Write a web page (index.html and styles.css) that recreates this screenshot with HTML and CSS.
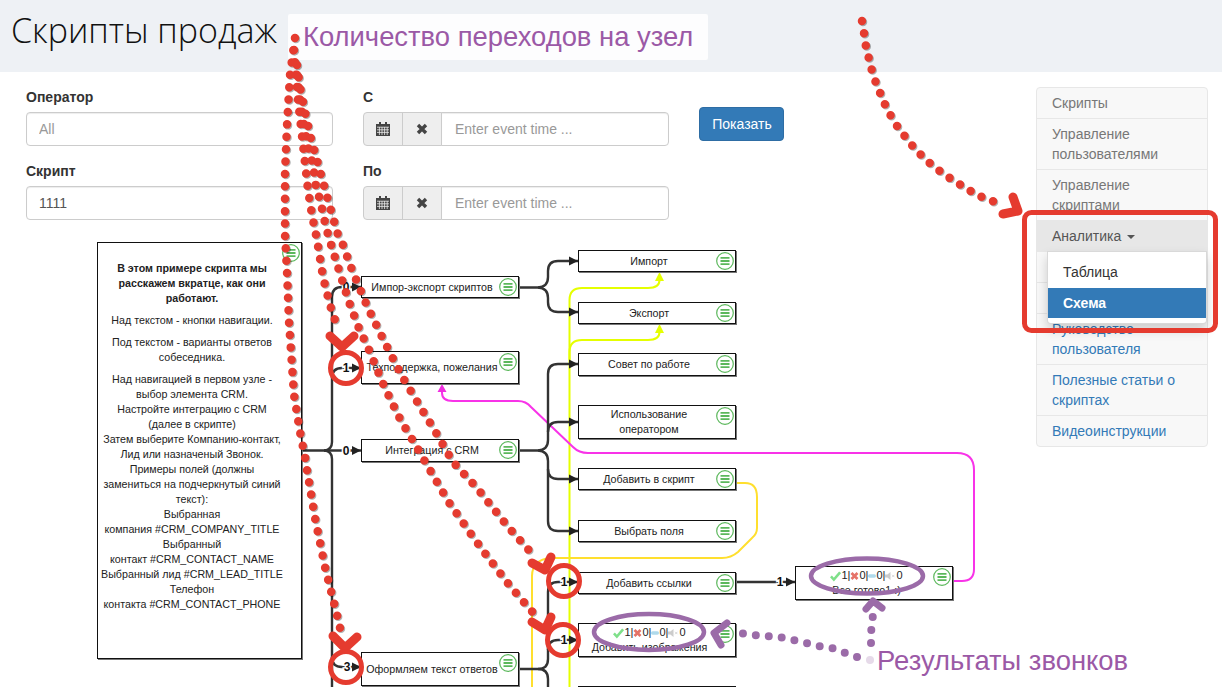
FILE: index.html
```html
<!DOCTYPE html>
<html lang="ru">
<head>
<meta charset="utf-8">
<title>Скрипты продаж</title>
<link rel="stylesheet" href="styles.css">
</head>
<body>
<svg width="0" height="0" class="defs">
  <symbol id="menu" viewBox="0 0 18 18">
    <circle cx="9" cy="9" r="8.3" fill="#fff" stroke="#5cb85c" stroke-width="1.2"/>
    <path d="M4.5 5.8h9M4.5 9h9M4.5 12.2h9" stroke="#5cb85c" stroke-width="1.8" fill="none"/>
  </symbol>
  <symbol id="check" viewBox="0 0 12 12"><path d="M1 6.5l3.2 3.5L11 2" fill="none" stroke="#7fe08a" stroke-width="2.8"/></symbol>
  <symbol id="cross" viewBox="0 0 12 12"><path d="M2 2l8 8M10 2l-8 8" fill="none" stroke="#e57368" stroke-width="3.6"/></symbol>
  <symbol id="dash" viewBox="0 0 12 12"><rect x="0" y="3.5" width="12" height="5" rx="2.5" fill="#afdaeb"/></symbol>
  <symbol id="mute" viewBox="0 0 14 12"><path d="M0 4h3l4-3v10L3 8H0z" fill="#ccc"/><path d="M9 4.5l3 3M12 4.5l-3 3" stroke="#ccc" stroke-width="1"/></symbol>
  <symbol id="calendar" viewBox="0 0 14 14"><path d="M0 2h14v12H0zM3 0h2v3H3zM9 0h2v3H9z" fill="#444"/><path d="M1 5.2h12M1 7.8h12M1 10.4h12M3.4 5v8M6 5v8M8.600 5v8M11.200 5v8" stroke="#eee" stroke-width=".8"/></symbol>
  <symbol id="times" viewBox="0 0 12 12"><path d="M2 2l8 8M10 2l-8 8" fill="none" stroke="#444" stroke-width="3.4"/></symbol>
</svg>

<header class="banner"><h1 class="banner-title">Скрипты продаж</h1></header>

<div class="layout">
  <main class="main">
    <form class="filters">
      <div class="filter-col">
        <div class="field">
          <label class="field-label">Оператор</label>
          <input class="control" placeholder="All">
        </div>
        <div class="field">
          <label class="field-label">Скрипт</label>
          <input class="control" value="1111">
        </div>
      </div>
      <div class="filter-col filter-col-date">
        <div class="field">
          <label class="field-label">С</label>
          <div class="input-group">
            <span class="addon"><svg class="addon-cal"><use href="#calendar"/></svg></span>
            <span class="addon"><svg class="addon-x"><use href="#times"/></svg></span>
            <input class="control group-control" placeholder="Enter event time ...">
          </div>
        </div>
        <div class="field">
          <label class="field-label">По</label>
          <div class="input-group">
            <span class="addon"><svg class="addon-cal"><use href="#calendar"/></svg></span>
            <span class="addon"><svg class="addon-x"><use href="#times"/></svg></span>
            <input class="control group-control" placeholder="Enter event time ...">
          </div>
        </div>
      </div>
      <button type="button" class="btn-show">Показать</button>
    </form>

    <section class="canvas">
      <svg class="edges" width="1036" height="452" viewBox="0 235 1036 452">
        <g class="edge-lime">
          <path d="M569.5 687V300Q569.5 288 582 288H648Q659.5 288 659.5 280V276"/>
          <path d="M569.5 360V352Q569.5 340 582 340H648Q659.5 340 659.5 332V328"/>
        </g>
        <polygon class="fill-lime" points="659.5,272 655,281 664,281"/>
        <polygon class="fill-lime" points="659.5,324 655,333 664,333"/>
        <path class="edge-yellow" d="M736 483H745Q757 483 757 497V528Q757 534 752 538L738 552Q731 558 722 558H550Q532 560 532 576V687"/>
        <path class="edge-pink" d="M953 581H962Q974 581 974 569V470Q974 453 957 453H588Q579 453 573 447L531 407Q526 401 518 401H453Q442 401 442 393V390"/>
        <polygon class="fill-pink" points="442,384 437.500,392 446.500,392"/>
        <polygon class="fill-yellow" points="442,684 438,689 446,689"/>
        <g class="edge-dark">
          <path d="M302 450.5H324Q332 450 332 442V297Q332 287 342 287H361"/>
          <path d="M332 378Q332 368 342 368H361"/>
          <path d="M324 450.5H361"/>
          <path d="M324 450.5Q332 451 332 459V687"/>
          <path d="M332 657Q332 667 342 667H361"/>
          <path d="M519 287.5H538Q548 287 548 277V271Q548 261 558 261H578"/>
          <path d="M538 287.5Q548 288 548 298V302Q548 312 558 312H578"/>
          <path d="M519 450.5H538Q548 450 548 440V374Q548 364 558 364H578"/>
          <path d="M548 432Q548 422 558 422H578"/>
          <path d="M538 450.5Q548 451 548 461V521Q548 531 558 531H578"/>
          <path d="M548 469Q548 479 558 479H578"/>
          <path d="M519 669H538Q548 669 548 659V592Q548 582 558 582H578"/>
          <path d="M548 650Q548 640 558 640H578"/>
          <path d="M538 669Q548 669 548 679V687"/>
          <path d="M736 582H795"/>
        </g>
        <g class="arrow">
          <polygon points="361,287 352,282.500 352,291.500"/>
          <polygon points="361,368 352,363.500 352,372.500"/>
          <polygon points="361,450.500 352,446 352,455"/>
          <polygon points="361,667 352,662.500 352,671.500"/>
          <polygon points="578,261 569,256.500 569,265.500"/>
          <polygon points="578,312 569,307.500 569,316.500"/>
          <polygon points="578,364 569,359.500 569,368.500"/>
          <polygon points="578,422 569,417.500 569,426.500"/>
          <polygon points="578,479 569,474.500 569,483.500"/>
          <polygon points="578,531 569,526.500 569,535.500"/>
          <polygon points="578,582 569,577.500 569,586.500"/>
          <polygon points="578,640 569,635.500 569,644.500"/>
          <polygon points="795,582 786,577.500 786,586.500"/>
        </g>
        <g class="edge-label">
          <text x="346" y="291">0</text>
          <text x="346" y="372">1</text>
          <text x="346" y="454.500">0</text>
          <text x="347" y="671">3</text>
          <text x="564" y="586">1</text>
          <text x="564" y="644">1</text>
          <text x="780" y="586">1</text>
        </g>
      </svg>

      <article class="node node-intro">
        <svg class="node-menu"><use href="#menu"/></svg>
        <p class="intro-title">В этом примере скрипта мы<br>расскажем вкратце, как они<br>работают.</p>
        <p>Над текстом - кнопки навигации.</p>
        <p>Под текстом - варианты ответов<br>собеседника.</p>
        <p>Над навигацией в первом узле -<br>выбор элемента CRM.<br>Настройте интеграцию с CRM<br>(далее в скрипте)<br>Затем выберите Компанию-контакт,<br>Лид или назначеный Звонок.<br>Примеры полей (должны<br>замениться на подчеркнутый синий<br>текст):<br>Выбранная<br>компания #CRM_COMPANY_TITLE<br>Выбранный<br>контакт #CRM_CONTACT_NAME<br>Выбранный лид #CRM_LEAD_TITLE<br>Телефон<br>контакта #CRM_CONTACT_PHONE</p>
      </article>

      <div class="node node-a1">Импор-экспорт скриптов<svg class="node-menu"><use href="#menu"/></svg></div>
      <div class="node node-a2">Техподдержка, пожелания<svg class="node-menu"><use href="#menu"/></svg></div>
      <div class="node node-a3">Интеграция с CRM<svg class="node-menu"><use href="#menu"/></svg></div>
      <div class="node node-a4">Оформляем текст ответов<svg class="node-menu"><use href="#menu"/></svg></div>

      <div class="node node-b1">Импорт<svg class="node-menu"><use href="#menu"/></svg></div>
      <div class="node node-b2">Экспорт<svg class="node-menu"><use href="#menu"/></svg></div>
      <div class="node node-b3">Совет по работе<svg class="node-menu"><use href="#menu"/></svg></div>
      <div class="node node-b4">Использование<br>оператором<svg class="node-menu"><use href="#menu"/></svg></div>
      <div class="node node-b5">Добавить в скрипт<svg class="node-menu"><use href="#menu"/></svg></div>
      <div class="node node-b6">Выбрать поля<svg class="node-menu"><use href="#menu"/></svg></div>
      <div class="node node-b7">Добавить ссылки<svg class="node-menu"><use href="#menu"/></svg></div>
      <div class="node node-b8">
        <div class="stats"><svg class="st"><use href="#check"/></svg>1|<svg class="st st-cross"><use href="#cross"/></svg>0|<svg class="st st-dash"><use href="#dash"/></svg>0|<svg class="st"><use href="#mute"/></svg>0</div>
        <div>Добавить изображения</div>
        <svg class="node-menu"><use href="#menu"/></svg>
      </div>
      <div class="node node-b9">&nbsp;</div>
      <div class="node node-c1">
        <div class="stats"><svg class="st"><use href="#check"/></svg>1|<svg class="st st-cross"><use href="#cross"/></svg>0|<svg class="st st-dash"><use href="#dash"/></svg>0|<svg class="st"><use href="#mute"/></svg>0</div>
        <div>Все готово1 :)</div>
        <svg class="node-menu"><use href="#menu"/></svg>
      </div>
    </section>
  </main>

  <aside class="sidebar">
    <ul class="side-nav">
      <li class="side-item">Скрипты</li>
      <li class="side-item">Управление пользователями</li>
      <li class="side-item">Управление скриптами</li>
      <li class="side-item side-active">Аналитика <span class="caret"></span>
        <ul class="dropdown">
          <li class="dropdown-item">Таблица</li>
          <li class="dropdown-item dropdown-current">Схема</li>
        </ul>
      </li>
      <li class="side-item side-link">&nbsp;</li>
      <li class="side-item side-link">&nbsp;</li>
      <li class="side-item side-link">Руководство пользователя</li>
      <li class="side-item side-link">Полезные статьи о скриптах</li>
      <li class="side-item side-link">Видеоинструкции</li>
    </ul>
  </aside>
</div>

<div class="callout callout-top">Количество переходов на узел</div>
<div class="callout callout-bottom">Результаты звонков</div>

<svg class="marks" width="1222" height="687" viewBox="0 0 1222 687">
  <rect class="mark-rect" x="1024.5" y="212.500" width="191" height="118" rx="7"/>
  <g class="dots-red">
    <polyline points="862,21 864,33 866,47 869,59 872,71 876,83 881,95 886,107 892,118 899,129 907,139 915,149 924,158 933,166 944,174 954,181 966,188 977,195 989,200 1002,204"/>
    <polyline points="295,38 290,75 287,125 285,173 285,235 287,272 289,322 294,395 300,432 305,457 307,470 315,518 325,567 337,615 340,628"/>
    <polyline points="294,50 298,100 301,127 305,163 308,190 312,215 317,240 323,277 330,305 337,326"/>
    <polyline points="297,75 300,100 304,125 308,147 313,165 316,187 320,200 326,227 329,238 333,251 337,264 349,302 358,326 369,350 384,386 401,421 415,444 427,465 448,501 471,534 487,556 510,586 535,615"/>
    <polyline points="297,65 300,87 305,112 310,135 317,160 323,182 330,207 338,235 343,245 352,270 368,308 385,343 403,378 424,413 438,436 453,462 477,488 509,528 535,557"/>
  </g>
  <g class="chev-red">
    <polyline points="1013,197 1018,211 1003,214"/>
    <polyline points="333,636 345,648 357,637"/>
    <polyline points="330,336 342,347 354,336"/>
    <polyline points="532,622 545,630 551,617"/>
    <polyline points="532,563 545,570 551,557"/>
  </g>
  <g class="rings-red">
    <circle cx="346" cy="368" r="15.500"/>
    <circle cx="346" cy="667" r="15.500"/>
    <circle cx="564" cy="581" r="15.500"/>
    <circle cx="563" cy="640" r="15.500"/>
  </g>
  <g class="rings-purple">
    <ellipse cx="867" cy="576" rx="56" ry="17.500"/>
    <ellipse cx="649" cy="632" rx="55" ry="18"/>
  </g>
  <polyline class="dots-purple" points="857,657 843,652 832,648 818,646 806,643 793,640 779,637 767,636 753,635 740,633"/>
  <polyline class="dots-purple" points="871,643 871,633 872,623 873,615"/>
  <polyline class="dots-purple dots-faint" points="870,660 870,652"/>
  <polyline class="chev-purple" points="727,623 714,633 721,645"/>
  <polyline class="chev-purple" points="866,609 873,601 882,608"/>
</svg>
</body>
</html>
```
FILE: styles.css
```css
* { box-sizing: border-box; }
html, body { margin: 0; height: 100%; overflow: hidden; }
body {
  position: relative;
  font-family: "Liberation Sans", Arial, sans-serif;
  font-size: 14px;
  line-height: 20px;
  color: #333;
  background: #fff;
}
.defs { position: absolute; }

.banner { height: 72px; background: #eef1f5; padding-left: 11px; }
.banner-title {
  margin: 0;
  font-family: "Open Sans", sans-serif;
  font-weight: 300;
  font-size: 34px;
  line-height: 60px;
  color: #111;
}

.layout { display: flex; }
.main { flex: 1; min-width: 0; }
.sidebar { width: 172px; margin: 15px 14px 0 0; flex: none; }

.filters { display: flex; padding: 15px 0 0 26px; }
.filter-col { width: 307px; }
.filter-col-date { width: 306px; margin-left: 30px; }
.field { margin-bottom: 15px; height: 59px; }
.filter-col .field:last-child { margin-bottom: 0; }
.field-label { display: block; font-weight: 700; margin-bottom: 5px; }
.control {
  display: block;
  width: 100%;
  height: 34px;
  padding: 6px 12px;
  border: 1px solid #ccc;
  border-radius: 4px;
  font: 14px/20px "Liberation Sans", Arial, sans-serif;
  color: #555;
  background: #fff;
  box-shadow: inset 0 1px 1px rgba(0,0,0,.075);
}
.control::placeholder { color: #999; opacity: 1; }
.input-group { display: flex; height: 34px; }
.addon {
  flex: none;
  width: 40px;
  display: flex;
  align-items: center;
  justify-content: center;
  background: #eee;
  border: 1px solid #ccc;
  margin-right: -1px;
}
.addon:first-child { border-radius: 4px 0 0 4px; }
.addon-cal { width: 14px; height: 14px; }
.addon-x { width: 12px; height: 12px; }
.group-control { flex: 1; min-width: 0; border-radius: 0 4px 4px 0; padding-left: 13px; }
.btn-show {
  align-self: flex-start;
  margin: 20px 0 0 30px;
  width: 85px;
  height: 34px;
  padding: 0 0 0 1px;
  border: 1px solid #2e6da4;
  border-radius: 4px;
  background: #337ab7;
  color: #fff;
  font: 14px/20px "Liberation Sans", Arial, sans-serif;
}

.canvas { position: relative; height: 452px; margin-top: 15px; font-size: 10.7px; line-height: 15px; color: #222; }
.edges { position: absolute; left: 0; top: 0; }
.edges path { fill: none; }
.edge-dark path { stroke: #333; stroke-width: 2.4; }
.edge-lime path { stroke: #e5ff00; stroke-width: 2; }
.fill-lime { fill: #e5ff00; }
.edge-yellow { stroke: #ffdf2e; stroke-width: 2; }
.fill-yellow { fill: #ffdf2e; }
.edge-pink { stroke: #f833e8; stroke-width: 2; }
.fill-pink { fill: #f02fe0; }
.arrow polygon { fill: #222; }
.edge-label text {
  font: 700 12px "Liberation Sans", Arial, sans-serif;
  fill: #111;
  text-anchor: middle;
  stroke: #fff;
  stroke-width: 3px;
  paint-order: stroke;
}

.node {
  position: absolute;
  display: flex;
  flex-direction: column;
  align-items: center;
  justify-content: center;
  text-align: center;
  padding-right: 16px;
  border: 1px solid #111;
  background: #fff;
  box-shadow: 1px 1px 0 #777;
}
.node > .node-menu { position: absolute; top: 1px; right: 1px; width: 18px; height: 18px; }
.node-intro { left: 97px; top: 7px; width: 205px; height: 417px; padding: 18px 15px 0 0; display: block; }
.node-intro p { margin: 0 0 7px; }
.node-intro .intro-title { font-weight: 700; }
.node-a1, .node-a2, .node-a3, .node-a4 { left: 361px; width: 158px; }
.node-a1 { top: 41px; height: 22px; }
.node-a2 { top: 116px; height: 33px; }
.node-a3 { top: 204px; height: 23px; }
.node-a4 { top: 417px; height: 34px; }
.node-b1, .node-b2, .node-b3, .node-b4, .node-b5, .node-b6, .node-b7, .node-b8, .node-b9 { left: 578px; width: 158px; }
.node-b1 { top: 15px; height: 22px; }
.node-b2 { top: 67px; height: 22px; }
.node-b3 { top: 118px; height: 23px; }
.node-b4 { top: 170px; height: 34px; }
.node-b5 { top: 233px; height: 22px; }
.node-b6 { top: 285px; height: 22px; }
.node-b7 { top: 337px; height: 22px; }
.node-b8 { top: 388px; height: 34px; padding-right: 15px; }
.node-b9 { top: 451px; height: 30px; }
.node-c1 { left: 795px; top: 331px; width: 158px; height: 34px; padding-right: 15px; }
.stats { display: flex; align-items: center; height: 15px; font-size: 11px; }
.st { width: 11px; height: 12px; }
.st-cross { width: 9px; }
.st-dash { width: 8px; }

.side-nav { list-style: none; margin: 0; padding: 0; border: 1px solid #e7e7e7; border-radius: 4px; background: #f8f8f8; }
.side-item {
  position: relative;
  padding: 5px 15px;
  color: #777;
  border-bottom: 1px solid #e7e7e7;
  line-height: 20px;
}
.side-item:last-child { border-bottom: 0; }
.side-link { color: #337ab7; }
.side-active { background: #e7e7e7; color: #555; }
.caret {
  display: inline-block;
  width: 0;
  height: 0;
  margin-left: 2px;
  vertical-align: middle;
  border-top: 4px solid #555;
  border-left: 4px solid transparent;
  border-right: 4px solid transparent;
}
.dropdown {
  position: absolute;
  left: 10px;
  right: 0;
  top: 100%;
  z-index: 2;
  list-style: none;
  margin: 0;
  padding: 0 0 5px;
  background: #fff;
  border: 1px solid rgba(0,0,0,.15);
  border-radius: 0 0 4px 4px;
  box-shadow: 0 6px 12px rgba(0,0,0,.175);
}
.dropdown-item { padding: 10px 15px 5px; color: #333; height: 36px; line-height: 20px; }
.dropdown-current { padding: 5px 15px; height: 30px; background: #337ab7; color: #fff; font-weight: 700; }

.callout { position: absolute; z-index: 4; color: #9b59a6; font-size: 27.4px; line-height: 46px; white-space: nowrap; }
.callout-top { left: 288px; top: 14px; width: 420px; height: 46px; padding-left: 15px; background: rgba(255,255,255,.85); border-radius: 2px; }
.callout-bottom { left: 877px; top: 638px; height: 46px; }

.marks { position: absolute; left: 0; top: 0; z-index: 5; pointer-events: none; }
.marks polyline, .marks rect, .marks circle, .marks ellipse { fill: none; }
.mark-rect { stroke: #e53b2f; stroke-width: 5; }
.dots-red polyline { stroke: #e53b2f; stroke-width: 8.5; stroke-linecap: round; stroke-linejoin: round; stroke-dasharray: 0 12.4; }
.dots-red { filter: drop-shadow(1px 1px 0 rgba(0,0,0,.3)); }
.chev-red polyline { stroke: #e53b2f; stroke-width: 9; stroke-linecap: round; stroke-linejoin: round; }
.rings-red circle { stroke: #e53b2f; stroke-width: 5; }
.rings-purple ellipse { stroke: #9b6ba8; stroke-width: 4.5; }
.dots-purple { stroke: #9b6ba8; stroke-width: 8; stroke-linecap: round; stroke-dasharray: 0 13; }
.dots-faint { opacity: .25; }
.chev-purple { stroke: #9b6ba8; stroke-width: 7; stroke-linecap: round; stroke-linejoin: round; }
```
